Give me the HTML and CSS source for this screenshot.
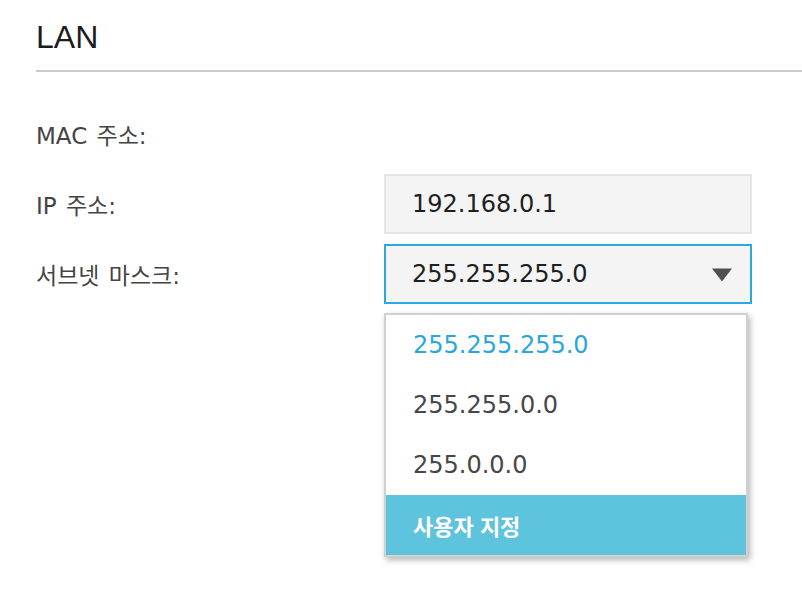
FILE: index.html
```html
<!DOCTYPE html>
<html lang="ko">
<head>
<meta charset="utf-8">
<title>LAN</title>
<link rel="stylesheet" href="styles.css">
</head>
<body>
<div class="page">
  <h1 class="title">LAN</h1>
  <div class="form">
    <div class="label">MAC 주소:</div>
    <div class="value-none"></div>

    <div class="label">IP 주소:</div>
    <div class="field">192.168.0.1</div>

    <div class="label">서브넷 마스크:</div>
    <div class="field select">
      <span>255.255.255.0</span>
      <svg class="arrow" width="20" height="14" viewBox="0 0 20 14"><polygon points="0,0.5 20,0.5 10,13.5" fill="#505050"/></svg>
    </div>

    <div class="spacer"></div>
    <div class="options">
      <div class="opt selected">255.255.255.0</div>
      <div class="opt">255.255.0.0</div>
      <div class="opt">255.0.0.0</div>
      <div class="opt custom">사용자 지정</div>
    </div>
  </div>
</div>
</body>
</html>
```
FILE: styles.css
```css
html, body {
  margin: 0;
  padding: 0;
  background: #ffffff;
}
body {
  font-family: "DejaVu Sans", "Noto Sans CJK KR", sans-serif;
}
.page {
  padding-left: 36px;
  min-height: 610px;
  box-sizing: border-box;
}
.title {
  margin: 0;
  padding-top: 19px;
  padding-bottom: 15px;
  line-height: 36px;
  font-family: "Liberation Sans", Arial, sans-serif;
  font-weight: normal;
  font-size: 32px;
  color: #1c1c1c;
  border-bottom: 2px solid #cccccc;
}
.form {
  margin-top: 32px;
  display: grid;
  grid-template-columns: 348px 368px;
  grid-template-rows: 60px 60px 60px auto;
  row-gap: 10px;
  padding-bottom: 20px;
}
.label {
  display: flex;
  align-items: center;
  font-size: 23px;
  word-spacing: 2px;
  color: #444444;
}
.field {
  box-sizing: border-box;
  height: 60px;
  display: flex;
  align-items: center;
  padding-left: 26px;
  background: #f4f4f4;
  border: 2px solid #e6e6e6;
  font-size: 24px;
  color: #1f1f1f;
}
.select {
  border-color: #2aa9df;
  padding-right: 18px;
  justify-content: space-between;
}
.arrow {
  display: block;
  margin-top: 2px;
}
.options {
  grid-column: 2;
  align-self: start;
  margin-top: -1px;
  width: 364px;
  box-sizing: border-box;
  background: #ffffff;
  border: 2px solid #d0d0d0;
  box-shadow: 2px 3px 6px rgba(0, 0, 0, 0.3);
}
.opt {
  height: 60px;
  display: flex;
  align-items: center;
  padding-left: 27px;
  font-size: 24px;
  color: #474747;
}
.opt.selected {
  color: #2aa6dd;
}
.opt.custom {
  background: #5ec3dc;
  color: #ffffff;
  font-family: "Noto Sans CJK KR", sans-serif;
  font-weight: bold;
  font-size: 22px;
}
```
